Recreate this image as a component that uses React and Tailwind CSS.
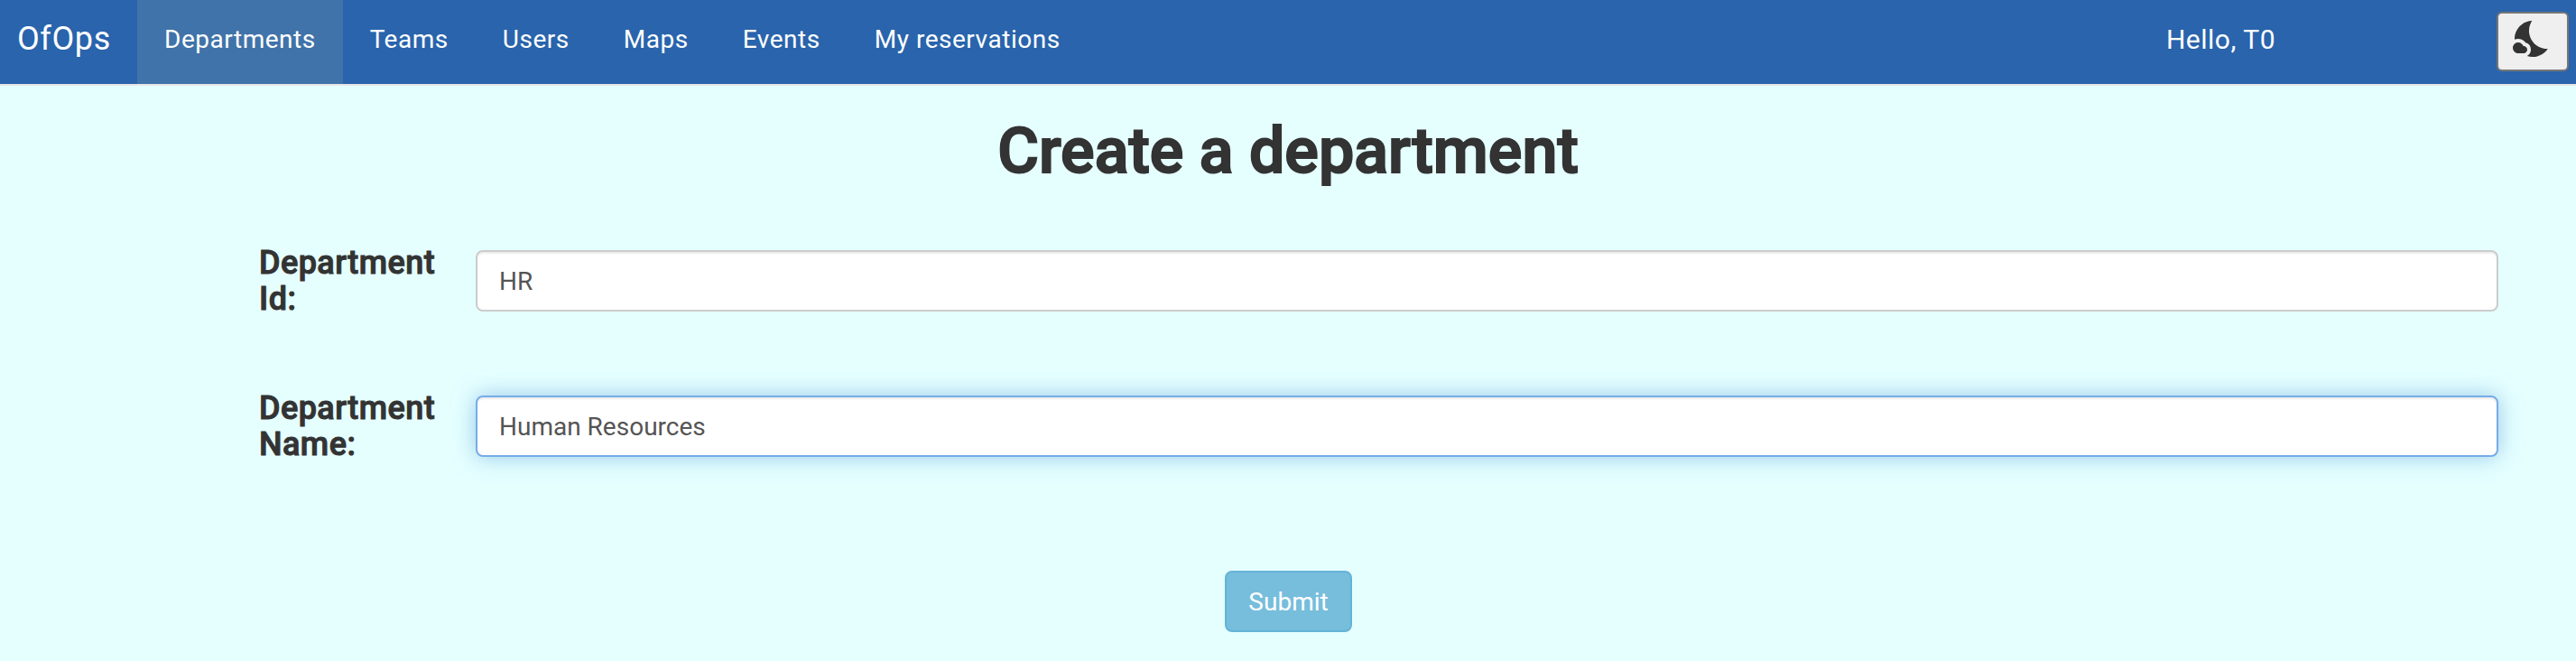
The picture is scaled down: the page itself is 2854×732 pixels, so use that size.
import { useState } from "react";
import { MdNightsStay } from "react-icons/md";

const links = ["Departments", "Teams", "Users", "Maps", "Events", "My reservations"];

function Navbar() {
  return (
    <nav className="flex h-[95px] items-start border-b-2 border-[#e7e7e7] bg-[#2964ac] text-white">
      <a className="w-[152px] pt-[23px] pl-[19px] text-[36px] leading-[40px] tracking-[0.6px]">OfOps</a>
      <ul className="flex h-[93px] text-[28px] leading-[40px] tracking-[0.52px]">
        {links.map((link, i) => (
          <li key={link} className={i === 0 ? "bg-[#4073a9] px-[30px] pt-[24px]" : "px-[30px] pt-[24px]"}>
            {link}
          </li>
        ))}
      </ul>
      <span className="mr-[245px] ml-auto pt-[24px] text-[30px] leading-[40px] tracking-[0.5px]">Hello, T0</span>
      <button className="mt-[13px] mr-[8px] flex h-[66px] w-[80px] justify-center rounded-[6px] border-2 border-[#767676] bg-[#efefef] pt-[4px] pr-px text-[#333]">
        <MdNightsStay className="size-[48px]" />
      </button>
    </nav>
  );
}

function Field({ label, initial, focused }) {
  const [value, setValue] = useState(initial);
  return (
    <div className="flex items-start">
      <label className="w-[240px] pr-[44px] text-[36px] leading-[40px] font-medium tracking-[0.45px] [-webkit-text-stroke:1px_#333]">
        {label}
      </label>
      <input
        value={value}
        onChange={(e) => setValue(e.target.value)}
        className={
          focused
            ? "mt-[6px] h-[68px] w-[2241px] rounded-[8px] border-2 border-[#76ace8] bg-white px-[24px] text-[28px] text-[#555] shadow-[inset_0_2px_2px_rgba(0,0,0,0.075),0_0_24px_rgba(102,165,220,0.6)] outline-none"
            : "mt-[6px] h-[68px] w-[2241px] rounded-[8px] border-2 border-[#ccc] bg-white px-[24px] text-[28px] text-[#555] shadow-[inset_0_2px_2px_rgba(0,0,0,0.075)] outline-none"
        }
      />
    </div>
  );
}

export default function App() {
  return (
    <div className="h-[732px] w-full overflow-hidden bg-[#e5ffff] font-['Roboto',sans-serif] text-[#333]">
      <Navbar />
      <h1 className="pt-[32px] text-center text-[70px] leading-[80px] font-medium tracking-[0.03px] [-webkit-text-stroke:2px_#333]">
        Create a department
      </h1>
      <form className="flex flex-col pt-[64px] pl-[287px]">
        <Field label="Department Id:" initial="HR" />
        <div className="pt-[81px]">
          <Field label="Department Name:" initial="Human Resources" focused />
        </div>
      </form>
      <div className="flex justify-center pt-[120px]">
        <button className="h-[68px] w-[141px] rounded-[8px] border-2 border-[#65b4d6] bg-[#77bddc] pt-px pl-px text-[28px] text-white">
          Submit
        </button>
      </div>
    </div>
  );
}
